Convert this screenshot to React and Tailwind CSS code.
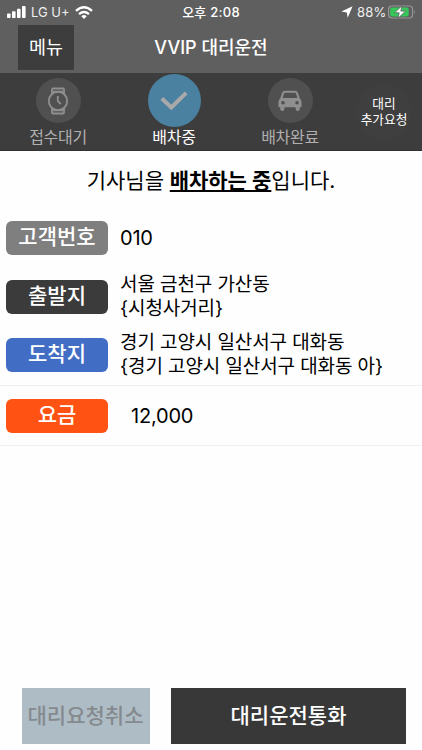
import React from "react";

const fields = [
  { label: "고객번호", color: "bg-[#7f7f7f]", lines: ["010"] },
  { label: "출발지", color: "bg-[#3b3b3b]", lines: ["서울 금천구 가산동", "{시청사거리}"] },
  { label: "도착지", color: "bg-[#416dc4]", lines: ["경기 고양시 일산서구 대화동", "{경기 고양시 일산서구 대화동 아}"] },
];

const WatchIcon = () => (
  <svg viewBox="0 0 22 28" className="w-[22px] h-7" fill="none" stroke="#8f8f8f" strokeWidth="1.8">
    <circle cx="11" cy="14" r="9.2" />
    <path d="M5 7V2.5Q5 1.5 6 1.5H16Q17 1.5 17 2.5V7M5 21V25.5Q5 26.5 6 26.5H16Q17 26.5 17 25.5V21M6 4.7H16M6 23.3H16" />
    <path d="M10.8 9V14.2L13.8 17" />
  </svg>
);

const CheckIcon = () => (
  <svg viewBox="0 0 28 20" className="w-7 h-5" fill="none" stroke="#a9a9a9" strokeWidth="4">
    <path d="M1.8 7.5L11.3 16.5L26.2 1.8" />
  </svg>
);

const CarIcon = () => (
  <svg viewBox="0 0 24 22" className="w-6 h-[22px]" fill="#8f8f8f">
    <path
      fillRule="evenodd"
      d="M7 0.8H17Q19.2 0.8 19.9 2.8L21.8 8.6Q23.5 9.8 23.5 12V17.2H21.8V19Q21.8 21 19.7 21Q17.6 21 17.6 19V17.2H6.4V19Q6.4 21 4.3 21Q2.2 21 2.2 19V17.2H0.5V12Q0.5 9.8 2.2 8.6L4.1 2.8Q4.8 0.8 7 0.8ZM7.2 2.8Q6.2 2.8 5.9 3.8L4.7 8H19.3L18.1 3.8Q17.8 2.8 16.8 2.8ZM5 11A1.8 1.8 0 1 0 5 14.6A1.8 1.8 0 1 0 5 11ZM19 11A1.8 1.8 0 1 0 19 14.6A1.8 1.8 0 1 0 19 11Z"
    />
  </svg>
);

const StatusBar = () => (
  <div className="h-6 relative flex justify-between text-white text-[13px] leading-6">
    <div className="flex items-center pl-[7px]">
      <svg viewBox="0 0 19 12" className="w-[19px] h-3" fill="white">
        <rect x="0" y="7.5" width="3.6" height="4.5" rx="0.8" />
        <rect x="5" y="5.3" width="3.6" height="6.7" rx="0.8" />
        <rect x="10" y="2.8" width="3.6" height="9.2" rx="0.8" />
        <rect x="15" y="0" width="3.6" height="12" rx="0.8" />
      </svg>
      <span className="ml-[5px] w-10 whitespace-nowrap text-[#eeeeee]">LG U+</span>
      <svg viewBox="0 0 18 13" className="ml-1 w-[18px] h-[13px]" fill="none" stroke="white" strokeWidth="2.3">
        <path d="M1 4.8Q9 -2.2 17 4.8" />
        <path d="M4 8.1Q9 3.8 14 8.1" />
        <path d="M6.3 10.2Q9 7.8 11.7 10.2L9 13Z" fill="white" stroke="none" />
      </svg>
    </div>
    <div className="absolute left-0 right-0 text-center font-medium tracking-[0.25px]">오후 2:08</div>
    <div className="flex items-center pr-[6px]">
      <svg viewBox="0 0 12 12" className="w-3 h-3" fill="white">
        <path d="M11.6 0.3L6.7 11.7L5.8 6.4L0.4 5.5Z" />
      </svg>
      <span className="ml-1 w-[31px] text-[#eeeeee] tracking-[0.2px]">88%</span>
      <svg viewBox="0 0 28 14" className="w-7 h-3.5">
        <rect x="0.6" y="1" width="24" height="12" rx="3.4" fill="none" stroke="#969696" strokeWidth="1.2" />
        <rect x="2.2" y="2.6" width="18.5" height="8.8" rx="1.8" fill="#35c759" />
        <path d="M26 5Q27.6 7 26 9Z" fill="#969696" />
        <path d="M14 0.7L6.6 7.8H11.2L10 13.3L17.6 6.1H12.8Z" fill="white" stroke="#5f5f5f" strokeWidth="0.8" />
      </svg>
    </div>
  </div>
);

const Step = ({ label, active, children }) => (
  <div className="w-[116px] flex flex-col items-center">
    <div className="h-[55px] flex items-center justify-center">
      <div
        className={`rounded-full flex items-center justify-center ${
          active ? "w-[53px] h-[53px] bg-[#4a80a0]" : "w-[45px] h-[45px] bg-[#505050]"
        }`}
      >
        {children}
      </div>
    </div>
    <span className={`text-[16px] leading-[18px] tracking-[-0.3px] ${active ? "text-white" : "text-[#b0b0b0]"}`}>
      {label}
    </span>
  </div>
);

const Badge = ({ label, color }) => (
  <div
    className={`w-[102px] h-[34px] shrink-0 rounded-[6px] flex items-center justify-center text-white text-[21px] leading-none font-medium ${color}`}
  >
    <span className="-mt-[3px]">{label}</span>
  </div>
);

const App = () => {
  return (
    <div className="w-full h-[750px] flex flex-col bg-[#fefefe] overflow-hidden font-[Inter,'Noto_Sans_CJK_KR',sans-serif]">
      <header className="h-[73px] bg-[#5f5f5f] shrink-0">
        <StatusBar />
        <div className="pt-px grid grid-cols-[56px_1fr_56px] px-[18px] text-white">
          <button className="h-[45px] bg-[#3d3d3d] text-[18.5px] font-normal">메뉴</button>
          <h1 className="text-center text-[18px] leading-[46px] font-medium">VVIP 대리운전</h1>
        </div>
      </header>

      <nav className="h-[78px] shrink-0 bg-[#3d3d3d] flex border-b border-[#303030]">
        <Step label="접수대기"><WatchIcon /></Step>
        <Step label="배차중" active><CheckIcon /></Step>
        <Step label="배차완료"><CarIcon /></Step>
        <button className="ml-[8px] mt-[11px] w-[56px] h-[55px] rounded-full bg-[#3f3f3f] text-white text-[12.7px] leading-[15.5px] whitespace-nowrap">
          대리
          <br />
          추가요청
        </button>
      </nav>

      <main className="flex-1 text-black">
        <h2 className="h-[58px] text-center text-[21px] leading-[60px] tracking-[-0.05px]">
          기사님을 <span className="font-semibold underline decoration-2 underline-offset-2">배차하는 중</span>입니다.
        </h2>

        <div className="h-[177px] pl-[6px] border-b border-[#f0f0f2]">
          {fields.map((field) => (
            <div key={field.label} className="h-[58.5px] flex items-center gap-3">
              <Badge label={field.label} color={field.color} />
              <div className="text-[19px] leading-6 whitespace-nowrap">
                {field.lines.map((line) => (
                  <p key={line} className={line === "010" ? "text-[20px] tracking-[-0.2px]" : "tracking-[-0.1px]"}>
                    {line}
                  </p>
                ))}
              </div>
            </div>
          ))}
        </div>

        <div className="h-[60px] pl-[6px] flex items-center gap-[23px] border-b border-[#f0f0f2]">
          <Badge label="요금" color="bg-[#ff5213]" />
          <span className="text-[20px] tracking-[-0.2px]">12,000</span>
        </div>
      </main>

      <footer className="pb-[6px] pl-[22px] pr-4 flex gap-[21px] text-[21px] font-medium">
        <button className="w-[128px] h-14 bg-[#aebdc5] text-[#858a8e]">
          <span className="-ml-px">대리요청취소</span>
        </button>
        <button className="flex-1 h-14 bg-[#383838] text-white">대리운전통화</button>
      </footer>
    </div>
  );
};

export default App;
